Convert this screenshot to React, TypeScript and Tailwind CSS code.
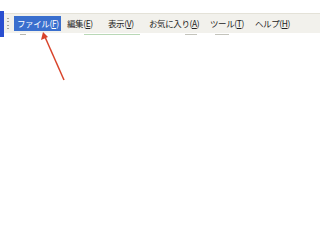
const items = [
  { label: "編集", key: "E", w: "w-[41px]" },
  { label: "表示", key: "V", w: "w-[41px]" },
  { label: "お気に入り", key: "A", w: "w-[61px]" },
  { label: "ツール", key: "T", w: "w-[45px]" },
  { label: "ヘルプ", key: "H", w: "w-[50px]" },
];

export default function App() {
  return (
    <div
      className="relative h-[240px] w-[320px] overflow-hidden bg-white"
      style={{ fontFamily: '"Noto Sans CJK JP", sans-serif' }}
    >
      <div className="h-[13px]" />
      {/* menu bar */}
      <div className="flex h-[20px] items-center border-t border-[#e4e2d8] bg-[#f2f1ec] text-[8.5px] leading-none tracking-[-0.4px]">
        <div className="-mt-[3px] h-[26px] w-[4px] shrink-0 self-start bg-[#2a4fd0]" />
        <div className="ml-[3px] mr-[5px] flex h-[14px] w-[2px] shrink-0 flex-col justify-between py-[1px]">
          {Array.from({ length: 4 }).map((_, i) => (
            <div key={i} className="h-[1px] w-[2px] bg-[#a8a698]" />
          ))}
        </div>
        <div className="flex h-[15px] w-[47px] shrink-0 items-center whitespace-nowrap bg-[#3a6fce] pl-[3px] text-white">
          ファイル(<span className="underline">F</span>)
        </div>
        <div className="w-[6px] shrink-0" />
        {items.map((it) => (
          <div
            key={it.key}
            className={`${it.w} flex h-[15px] shrink-0 items-center whitespace-nowrap text-[#222]`}
          >
            {it.label}(<span className="underline">{it.key}</span>)
          </div>
        ))}
      </div>
      {/* faint toolbar remnants */}
      <div className="relative h-[4px]">
        <div className="absolute left-[20px] top-[1px] h-[1px] w-[6px] bg-[#b8b8b0]" />
        <div className="absolute left-[84px] top-[1px] h-[1px] w-[56px] bg-[#b9d8b6]" />
        <div className="absolute left-[185px] top-[1px] h-[1px] w-[12px] bg-[#c4c4bc]" />
        <div className="absolute left-[215px] top-[1px] h-[1px] w-[14px] bg-[#c4c4bc]" />
      </div>
      {/* arrow */}
      <svg className="absolute left-0 top-0" width="320" height="240">
        <line x1="64" y1="80" x2="45" y2="37" stroke="#d9442b" strokeWidth="1.5" />
        <polygon points="43,32 41,40 48,37" fill="#d9442b" />
      </svg>
    </div>
  );
}
